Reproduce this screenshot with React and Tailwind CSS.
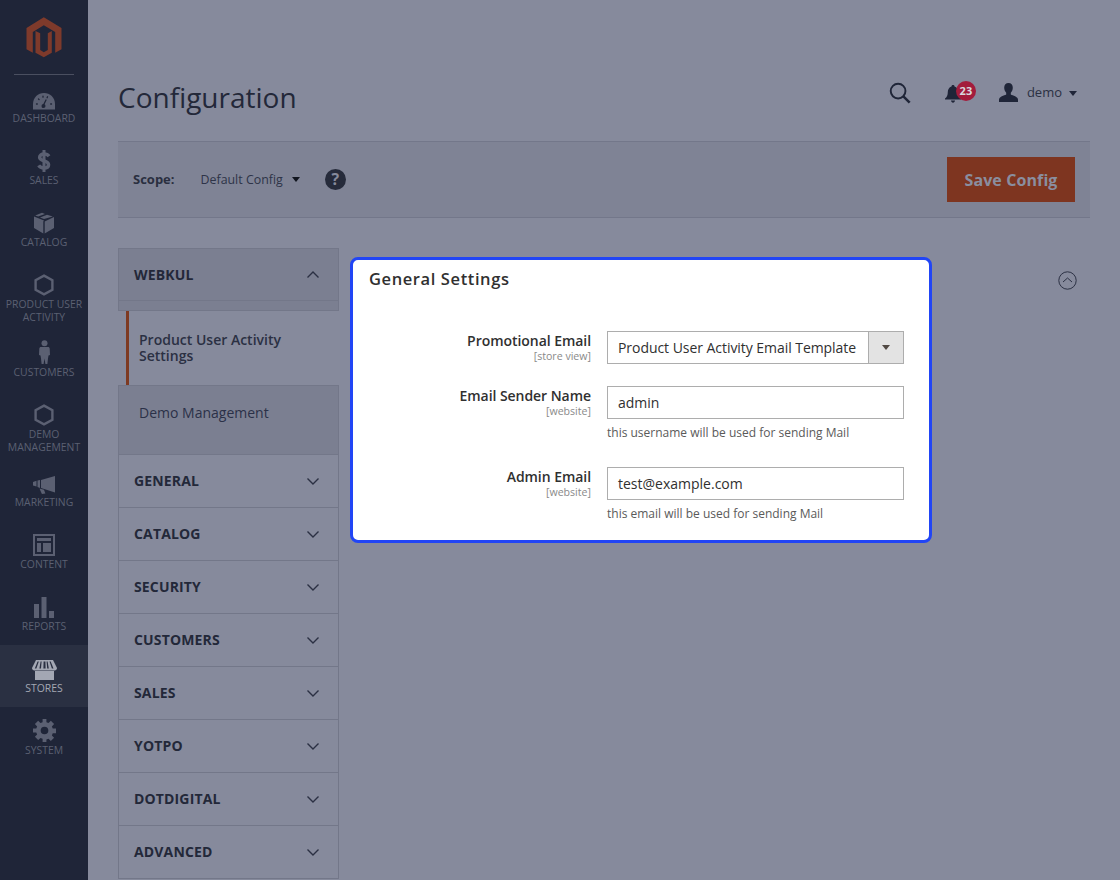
import React from "react";

const Gauge = () => (
  <svg width="24" height="18" viewBox="0 0 24 18">
    <path fill="#5b6072" fillRule="evenodd" d="M1 17.5V12C1 5.5 6 1 12 1s11 4.5 11 11v5.5H1Z" />
    <path stroke="#1f2538" strokeWidth="1.3" strokeLinecap="round" d="M4.5 12h.8M6.5 7l.6.6M11 4.2v1M15.5 4.8l-.4.9M19.5 12h-.8M10.5 15l3.5-7" />
    <circle cx="11.5" cy="14" r="2" fill="#1f2538" />
  </svg>
);
const Dollar = () => (
  <svg width="14" height="22" viewBox="0 0 14 22">
    <path fill="none" stroke="#5b6072" strokeWidth="3.4" d="M12 6.2C11 4.7 9 4 7 4 4.5 4 2.6 5.2 2.6 7.2c0 4.6 9 2.6 9 7.5 0 2.2-2 3.3-4.6 3.3-2.2 0-4.3-.9-5.3-2.6" />
    <path stroke="#5b6072" strokeWidth="3" d="M7 0v22" />
  </svg>
);
const Box = () => (
  <svg width="20" height="22" viewBox="0 0 20 22">
    <path fill="#5b6072" d="M10 8.6 0 4.6V16l9.3 5.6V9.5L10 8.6Zm.7 1V21.6L20 16V5Z" />
    <path fill="#5b6072" d="M8 .8 1.2 3.4l3 1.2L11 1.9 8 .8Zm5 1.9L6 5.5l4 1.6 8.8-2.7-5.8-1.7Z" />
  </svg>
);
const Hex = () => (
  <svg width="20" height="22" viewBox="0 0 20 22">
    <path fill="none" stroke="#5b6072" strokeWidth="2.4" d="M10 1.6 18.4 6.3v9.4L10 20.4 1.6 15.7V6.3Z" />
  </svg>
);
const Person = () => (
  <svg width="11" height="24" viewBox="0 0 11 24">
    <circle cx="5.5" cy="3.2" r="3" fill="#5b6072" />
    <path fill="#5b6072" d="M2 7h7c1 0 1.6.7 1.7 1.7l.3 6.3-1.5.4-.5 3-.6 5.6H6.400L5.500 18.500 4.600 24H2.600L2 18.400l-.5-3L0 15l.3-6.300C.4 7.700 1 7 2 7Z" />
  </svg>
);
const Megaphone = () => (
  <svg width="22" height="18" viewBox="0 0 22 18">
    <path fill="#5b6072" d="M22 0v16.500L8 12V4L22 0Z" />
    <path fill="#5b6072" d="M0 6l3.500-1.200V10.600L0 9.500ZM4.500 4.500 7 4v8L4.500 11Z" />
    <path fill="#5b6072" d="M6.500 12.500l4.500 1.300 1.400 3.700-3.500.5Z" />
  </svg>
);
const Layout = () => (
  <svg width="22" height="22" viewBox="0 0 22 22">
    <path fill="#5b6072" fillRule="evenodd" d="M0 0h22v22H0Zm2 2v18h18V2Zm2 2h14v3H4Zm0 5h4v9H4Zm6 0h8v9h-8Z" />
  </svg>
);
const Bars = () => (
  <svg width="20" height="21" viewBox="0 0 20 21">
    <path fill="#5b6072" d="M0 7h5v14H0ZM7.500 0h5v21h-5ZM15 14h5v7h-5Z" />
  </svg>
);
const Store = () => (
  <svg width="25" height="20" viewBox="0 0 25 20">
    <path fill="#a3a7b3" d="M3 11h19v9H3Z" />
    <path fill="#a3a7b3" fillRule="evenodd" d="M4 0h17l4 8c0 1.400-1 2.400-2.500 2.400H2.500C1 10.400 0 9.400 0 8Zm1.600 1.600L2.800 8.400h1.600l2.400-6.800Zm3 0L7.400 8.400H9l.6-6.800Zm3 0-.2 6.800h2.200l-.2-6.800Zm3 0 .6 6.800h1.600l-1.200-6.800Zm2.900 0 2.400 6.800h1.600l-2.800-6.800Z" />
  </svg>
);
const Gear = () => (
  <svg width="23" height="23" viewBox="0 0 24 24">
    <path fill="#5b6072" fillRule="evenodd" d="M14 0v3.300l2.200.9 2.400-2.300 3.400 3.400-2.300 2.400.9 2.300H24v4.900h-3.400l-.9 2.200 2.300 2.400-3.400 3.400-2.400-2.300-2.200.9V24H10v-3.400l-2.200-.9-2.400 2.300L2 18.600l2.300-2.400-.9-2.200H0V10h3.400l.9-2.300L2 5.300 5.400 1.900l2.400 2.300 2.200-.9V0Zm-2 8a4 4 0 1 0 0 8 4 4 0 0 0 0-8Z" />
  </svg>
);

const nav = [
  { lines: ["DASHBOARD"], Icon: Gauge, h: "h-[62px]" },
  { lines: ["SALES"], Icon: Dollar, h: "h-[62px]" },
  { lines: ["CATALOG"], Icon: Box, h: "h-[62px]" },
  { lines: ["PRODUCT USER", "ACTIVITY"], Icon: Hex, h: "h-[68px]" },
  { lines: ["CUSTOMERS"], Icon: Person, h: "h-[62px]" },
  { lines: ["DEMO", "MANAGEMENT"], Icon: Hex, h: "h-[68px]" },
  { lines: ["MARKETING"], Icon: Megaphone, h: "h-[62px]" },
  { lines: ["CONTENT"], Icon: Layout, h: "h-[62px]" },
  { lines: ["REPORTS"], Icon: Bars, h: "h-[62px]" },
  { lines: ["STORES"], Icon: Store, h: "h-[62px]", active: true },
  { lines: ["SYSTEM"], Icon: Gear, h: "h-[62px]" },
];

const Chevron = ({ up }) => (
  <svg width="14" height="9" viewBox="0 0 14 9" className="block">
    <path fill="none" stroke="#2b3043" strokeWidth="1.4" d={up ? "M1.500 7.500 7 2l5.500 5.500" : "M1.500 1.500 7 7l5.500-5.500"} />
  </svg>
);

const Caret = ({ className = "border-t-[#1f2538]" }) => (
  <span className={`inline-block w-0 h-0 border-x-[4.5px] border-x-transparent border-t-[5px] ${className}`} />
);

const Field = ({ label, scope, note, children, className }) => (
  <div className={`flex ${className}`}>
    <div className="w-[222px] text-right shrink-0">
      <div className="text-[14px] leading-[19px] font-semibold tracking-[-0.05px] text-[#303030]">{label}</div>
      <div className="text-[10.6px] leading-[11px] mt-[1px] text-[#8a8a8a]">{scope}</div>
    </div>
    <div className="ml-[16px] w-[297px]">
      {children}
      {note && <div className="text-[12px] leading-[16px] mt-[6px] text-[#5a5a5a]">{note}</div>}
    </div>
  </div>
);

const sections = ["GENERAL", "CATALOG", "SECURITY", "CUSTOMERS", "SALES", "YOTPO", "DOTDIGITAL", "ADVANCED"];

export default function App() {
  return (
    <div className="flex h-[880px] overflow-hidden bg-[#868a9c] font-['Open_Sans',sans-serif]">
      <aside className="w-[88px] shrink-0 bg-[#1f2538]">
        <div className="h-[75px] mx-[14px] border-b border-[#4a4f60] flex justify-center pt-[17px]">
          <svg width="36" height="41" viewBox="27 17 35 41" className="block">
            <path fill="#7e3a2b" d="M44.300 17.300 62 28v21.300l-6.300 3.400V32l-11.400-6.700L33.300 32v20.700L27 49.300V28Z" />
            <path fill="#7e3a2b" d="M40.700 33.300V50l3.600 2.300 4-2.300V33.300l4-2.300v21.700l-8 4.600-8.300-4.600V31Z" />
          </svg>
        </div>
        {nav.map(({ lines, Icon, h, active }) => (
          <div key={lines[0]} className={`${h} flex flex-col items-center ${active ? "bg-[#2a3042]" : ""}`}>
            <div className="h-[36px] pb-[1px] flex items-end justify-center shrink-0"><Icon /></div>
            <div className={`text-[10.4px] leading-[13px] text-center mt-[1px] whitespace-nowrap ${active ? "text-[#a3a7b3]" : "text-[#5b6072]"}`}>
              {lines.map((l) => <div key={l}>{l}</div>)}
            </div>
          </div>
        ))}
      </aside>

      <main className="flex-1 pl-[30px] pr-[30px]">
        <header className="h-[141px] flex items-start">
          <h1 className="mt-[78px] text-[28px] leading-[38px] font-normal text-[#232839]">Configuration</h1>
          <div className="ml-auto mt-[82px] flex items-center">
            <svg width="22" height="22" viewBox="0 0 23 23" className="block -mt-[1px]">
              <circle cx="9.500" cy="9.500" r="7.700" fill="none" stroke="#1f2538" strokeWidth="2" />
              <path stroke="#1f2538" strokeWidth="2.600" d="m15 15 6.600 6.600" />
            </svg>
            <div className="relative ml-[34px] w-[32px] h-[22px]">
              <svg width="16" height="18" viewBox="0 0 16 18" className="block absolute left-0 top-[3px]">
                <path fill="#1f2538" d="M8 0c1 0 1.500.6 1.500 1.400C12 2.200 13.200 4.400 13.200 7c0 3.600 1 5 2.800 6.600v.9H0v-.9C1.800 12 2.800 10.600 2.800 7c0-2.600 1.200-4.800 3.700-5.600C6.500.6 7 0 8 0ZM6 15.500h4c0 1.200-1 2.200-2 2.200s-2-1-2-2.200Z" />
              </svg>
              <span className="absolute left-[11px] top-[-1px] w-[20px] h-[20px] rounded-full bg-[#a31c3c] text-[#d8d8de] text-[11px] leading-[20px] font-bold text-center">23</span>
            </div>
            <svg width="19" height="19" viewBox="0 0 19 19" className="block ml-[22px] -mt-[1px]">
              <path fill="#1f2538" d="M9.500 0c2.700 0 4.300 2 4.300 4.800 0 2-1 4-2 5v1.600c2 1 7.200 2 7.200 5.300V19H0v-2.300c0-3.300 5.200-4.300 7.200-5.300V9.800c-1-1-2-3-2-5C5.200 2 6.800 0 9.500 0Z" />
            </svg>
            <span className="ml-[9px] text-[13px] leading-[18px] text-[#2b3043] -mt-[2px]">demo</span>
            <span className="ml-[7px] flex"><Caret /></span>
            <span className="w-[13px]" />
          </div>
        </header>

        <section className="h-[77px] bg-[#7f8395] border-y border-[#73778a] flex items-center pl-[15px] pr-[15px]">
          <span className="text-[13px] font-bold text-[#2a2f40]">Scope:</span>
          <span className="ml-[26px] text-[12.4px] text-[#2e3448] mt-[1px]">Default Config</span>
          <span className="ml-[9px] flex"><Caret className="border-t-[#11151f]" /></span>
          <span className="ml-[25px] w-[21px] h-[21px] rounded-full bg-[#262b3b] text-[#868a9c] text-[16px] leading-[21px] font-bold text-center">?</span>
          <button className="ml-auto w-[128px] h-[45px] bg-[#7e3520] text-[#8a8e9f] text-[16px] font-bold tracking-[0.1px]">Save Config</button>
        </section>

        <div className="flex mt-[30px] items-start">
          <nav className="w-[221px] shrink-0">
            <div className="h-[53px] bg-[#7b7f91] border border-[#737789] flex items-center justify-between pl-[15px] pr-[18px]">
              <span className="text-[14px] leading-[19px] font-bold text-[#232839] tracking-[0.15px]">WEBKUL</span>
              <Chevron up />
            </div>
            <div className="h-[10px] bg-[#7b7f91] border-x border-b border-[#737789]" />
            <div className="ml-[8px] h-[74px] border-l-[3px] border-[#7e3a22] pl-[10px] pt-[21px] text-[14px] leading-[16px] font-semibold text-[#2b3043]">
              Product User Activity<br />Settings
            </div>
            <div className="h-[70px] bg-[#7b7f91] border border-[#737789] pl-[20px] pt-[17px] text-[14px] leading-[20px] text-[#2b3148]">Demo Management</div>
            {sections.map((s) => (
              <div key={s} className="h-[53px] border-x border-b border-[#737789] flex items-center justify-between pl-[15px] pr-[18px]">
                <span className="text-[14px] leading-[19px] font-bold text-[#232839] tracking-[0.15px] -mt-[2px]">{s}</span>
                <Chevron />
              </div>
            ))}
          </nav>

          <div className="ml-[11px] mt-[9px] w-[582px] h-[286px] bg-white border-[3px] border-[#2145f5] rounded-[8px] pl-[16px] shrink-0">
            <h2 className="mt-[8px] text-[16.5px] leading-[22px] font-semibold text-[#303030] tracking-[0.6px]">General Settings</h2>
            <Field className="mt-[41px]" label="Promotional Email" scope="[store view]">
              <div className="h-[33px] border border-[#adadad] flex">
                <span className="flex-1 pl-[10px] text-[14px] leading-[31px] tracking-[-0.05px] text-[#303030]">Product User Activity Email Template</span>
                <span className="w-[35px] bg-[#e3e3e3] border-l border-[#adadad] flex items-center justify-center"><Caret className="border-t-[#514943]" /></span>
              </div>
            </Field>
            <Field className="mt-[22px]" label="Email Sender Name" scope="[website]" note="this username will be used for sending Mail">
              <div className="h-[33px] border border-[#adadad] pl-[10px] text-[14px] leading-[31px] text-[#303030]">admin</div>
            </Field>
            <Field className="mt-[26px]" label="Admin Email" scope="[website]" note="this email will be used for sending Mail">
              <div className="h-[33px] border border-[#adadad] pl-[10px] text-[14px] leading-[31px] text-[#303030]">test@example.com</div>
            </Field>
          </div>

          <svg width="19" height="19" viewBox="0 0 19 19" className="block ml-[126px] mt-[23px]">
            <circle cx="9.500" cy="9.500" r="8.700" fill="none" stroke="#2b3043" strokeWidth="1" />
            <path fill="none" stroke="#2b3043" strokeWidth="1" d="M5 11l4.500-4 4.500 4" />
          </svg>
        </div>
      </main>
    </div>
  );
}
